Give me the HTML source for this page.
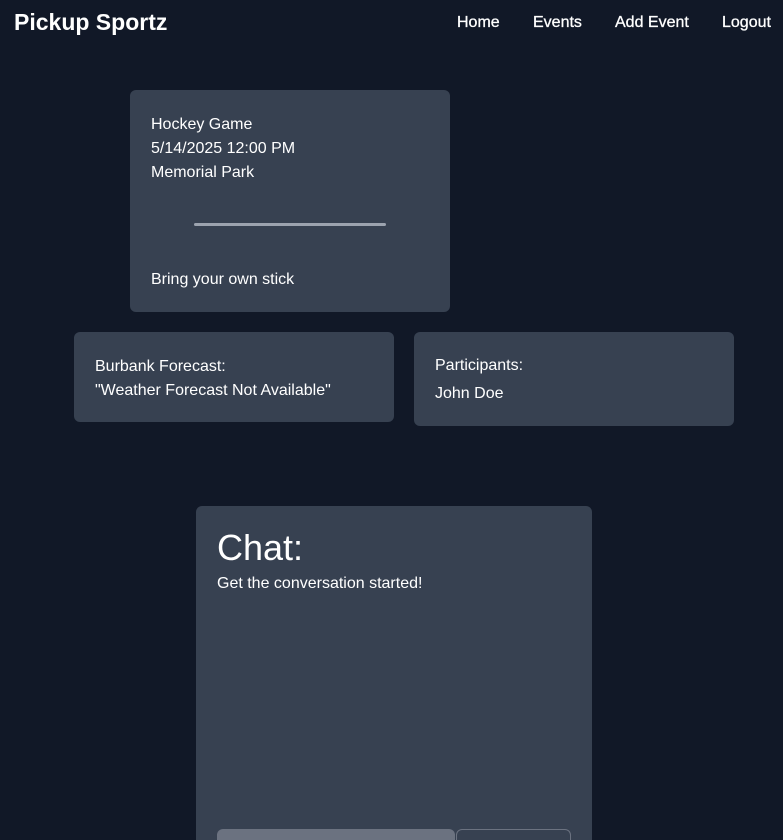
<!DOCTYPE html>
<html style="height:840px;overflow:hidden"><head><style>
body{margin:0;background:#111827;width:783px;height:840px;overflow:hidden;position:relative;font-family:"Liberation Sans",sans-serif;color:#fff;font-size:16px}
.a{position:absolute}
.card{position:absolute;background:#374151;border-radius:6px}
nav .l{position:absolute;top:14px;font-size:16px;-webkit-text-stroke:0.3px #fff}
</style></head><body>
<div class="a" style="left:14px;top:9px;font-size:23px;font-weight:bold">Pickup Sportz</div>
<nav><span class="l" style="left:457px">Home</span><span class="l" style="left:533px">Events</span><span class="l" style="left:615px">Add Event</span><span class="l" style="left:722px">Logout</span></nav>
<div class="card" style="left:130px;top:90px;width:320px;height:222px">
<div class="a" style="left:21px;top:23px;line-height:24px">Hockey Game<br>5/14/2025 12:00 PM<br>Memorial Park</div>
<div class="a" style="left:64px;top:133px;width:192px;height:3px;background:#9ca3af;border-radius:2px"></div>
<div class="a" style="left:21px;top:181px">Bring your own stick</div>
</div>
<div class="card" style="left:74px;top:332px;width:320px;height:90px">
<div class="a" style="left:21px;top:23px;line-height:24px">Burbank Forecast:<br>"Weather Forecast Not Available"</div></div>
<div class="card" style="left:414px;top:332px;width:320px;height:94px">
<div class="a" style="left:21px;top:25px">Participants:</div>
<div class="a" style="left:21px;top:53px">John Doe</div></div>
<div class="card" style="left:196px;top:506px;width:396px;height:360px">
<div class="a" style="left:21px;top:21px;font-size:36px">Chat:</div>
<div class="a" style="left:21px;top:69px">Get the conversation started!</div>
<div class="a" style="left:21px;top:323px;width:238px;height:40px;background:#6b7280;border-radius:6px"></div>
<div class="a" style="left:260px;top:323px;width:115px;height:40px;border:1px solid #6b7280;border-radius:6px;box-sizing:border-box"></div>
</div>
</body></html>
